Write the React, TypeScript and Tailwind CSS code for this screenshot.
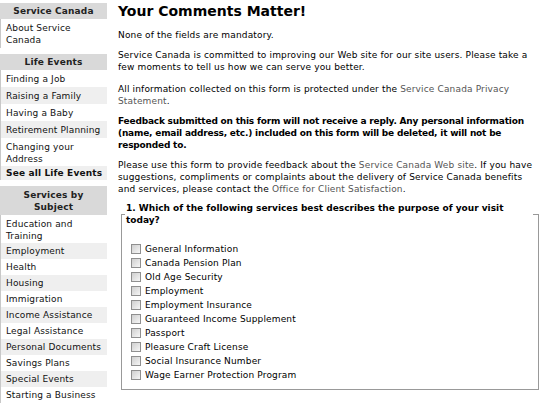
import React from "react";

const font = { fontFamily: '"DejaVu Sans", Verdana, sans-serif' };

type Row = { label: string; cls: string; bold?: boolean };

function Section({ title, rows, headerCls, className }: { title: string; rows: Row[]; headerCls: string; className: string }) {
  return (
    <div className={className}>
      <div className={"bg-[#d9d9d9] text-center font-bold text-[#222] leading-[12px] px-[4px] " + headerCls}>{title}</div>
      {rows.map((r, i) => (
        <div
          key={r.label}
          className={
            "leading-[12px] pl-[5px] pr-[1px] border-l border-[#c8c8c8] " +
            (i % 2 === 1 ? "bg-[#efefef] " : "bg-white ") +
            (r.bold ? "font-bold " : "") +
            r.cls
          }
        >
          {r.label}
        </div>
      ))}
    </div>
  );
}

const options = [
  "General Information",
  "Canada Pension Plan",
  "Old Age Security",
  "Employment",
  "Employment Insurance",
  "Guaranteed Income Supplement",
  "Passport",
  "Pleasure Craft License",
  "Social Insurance Number",
  "Wage Earner Protection Program",
];

const r17 = "pt-[3px] pb-[2px]";
const r16 = "pt-[2px] pb-[2px]";

export default function App() {
  return (
    <div className="w-[546px] h-[406px] overflow-hidden bg-white text-black text-[9px] tracking-[0.15px] flex" style={font}>
      <aside className="w-[107px] shrink-0 pt-[3px] text-[#111]">
        <Section
          className="mb-[6px]"
          headerCls="pt-[2px] pb-[2px]"
          title="Service Canada"
          rows={[{ label: "About Service Canada", cls: r17 }]}
        />
        <Section
          className="mb-[6px]"
          headerCls="pt-[2px] pb-[2px]"
          title="Life Events"
          rows={[
            { label: "Finding a Job", cls: r17 },
            { label: "Raising a Family", cls: r17 },
            { label: "Having a Baby", cls: r17 },
            { label: "Retirement Planning", cls: r17 },
            { label: "Changing your Address", cls: "pt-[3px] pb-[1px]" },
            { label: "See all Life Events", cls: "pt-[1px] pb-[1px]", bold: true },
          ]}
        />
        <Section
          className=""
          headerCls="pt-[3px] pb-[2px]"
          title="Services by Subject"
          rows={[
            { label: "Education and Training", cls: "pt-[3px] pb-[1px]" },
            { label: "Employment", cls: r16 },
            { label: "Health", cls: r16 },
            { label: "Housing", cls: r16 },
            { label: "Immigration", cls: r16 },
            { label: "Income Assistance", cls: r16 },
            { label: "Legal Assistance", cls: r16 },
            { label: "Personal Documents", cls: r16 },
            { label: "Savings Plans", cls: r16 },
            { label: "Special Events", cls: r16 },
            { label: "Starting a Business", cls: r16 },
          ]}
        />
      </aside>
      <main className="flex-1 pl-[11px] pr-[5px] pt-[3px] leading-[12px]">
        <h1 className="text-[14px] font-bold tracking-normal leading-[17px] mb-[9px]">Your Comments Matter!</h1>
        <p className="mb-[8px]">None of the fields are mandatory.</p>
        <p className="mb-[10px]">
          Service Canada is committed to improving our Web site for our site users. Please take a few moments to tell us how we can serve you better.
        </p>
        <p className="mb-[8px]">
          All information collected on this form is protected under the <span className="text-[#555]">Service Canada Privacy Statement</span>.
        </p>
        <p className="mb-[8px] font-bold tracking-[-0.2px]">
          Feedback submitted on this form will not receive a reply. Any personal information (name, email address, etc.) included on this form will be deleted, it will not be responded to.
        </p>
        <p className="mb-[7px]">
          Please use this form to provide feedback about the <span className="text-[#555]">Service Canada Web site</span>. If you have suggestions, compliments or complaints about the delivery of Service Canada benefits and services, please contact the <span className="text-[#555]">Office for Client Satisfaction</span>.
        </p>
        <fieldset className="ml-[3px] mr-[2px] border border-[#999] pl-[3px] pr-[5px] pb-[7px]">
          <legend className="font-bold tracking-normal px-[1px] leading-[12px]">
            1. Which of the following services best describes the purpose of your visit today?
          </legend>
          <div className="pt-[16px] pl-[6px]">
            {options.map((o) => (
              <div key={o} className="flex items-center h-[14px]">
                <span className="w-[10px] h-[10px] border border-[#8f8f8f] bg-gradient-to-br from-[#cfcfcf] to-[#f6f6f6] mr-[4px] shrink-0" />
                <span>{o}</span>
              </div>
            ))}
          </div>
        </fieldset>
      </main>
    </div>
  );
}
